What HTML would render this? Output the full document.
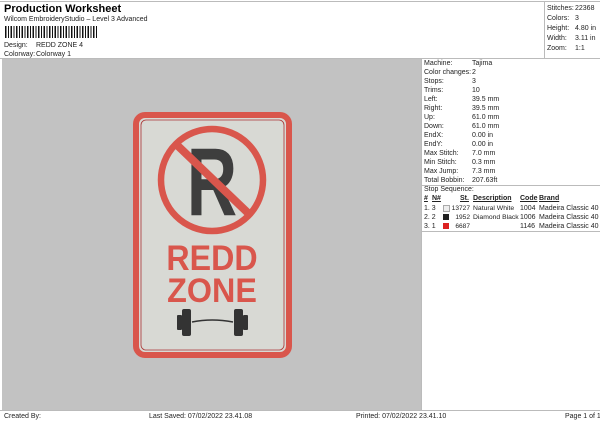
<!DOCTYPE html>
<html><head><style>
body{margin:0;width:600px;height:424px;background:#fff;font-family:"Liberation Sans",sans-serif;font-size:7px;color:#222;position:relative;overflow:hidden}
.a{position:absolute;white-space:nowrap}
.hl{position:absolute;background:#bbb}
</style></head><body>
<div class="hl" style="left:0;top:1px;width:600px;height:1px"></div>
<div class="a" style="left:4px;top:3px;font-size:11px;font-weight:bold;color:#000">Production Worksheet</div>
<div class="a" style="left:4px;top:16px">Wilcom EmbroideryStudio – Level 3 Advanced</div>
<div class="a" style="left:5px;top:26px;width:93px;height:12px;background:repeating-linear-gradient(90deg,#111 0 1.5px,#fff 1.5px 3px,#111 3px 4px,#fff 4px 5.5px)"></div>
<div class="a" style="left:4px;top:42px">Design:</div><div class="a" style="left:36px;top:42px">REDD ZONE 4</div>
<div class="a" style="left:4px;top:51px">Colorway:</div><div class="a" style="left:36px;top:51px">Colorway 1</div>
<div class="hl" style="left:544px;top:1px;width:1px;height:57px"></div>
<div class="a" style="left:547px;top:4px;line-height:10px">Stitches:<br>Colors:<br>Height:<br>Width:<br>Zoom:</div>
<div class="a" style="left:575px;top:4px;line-height:10px">22368<br>3<br>4.80 in<br>3.11 in<br>1:1</div>
<div class="hl" style="left:0;top:58px;width:600px;height:1px"></div>
<div class="a" style="left:2px;top:59px;width:419px;height:351px;background:#c2c2c2"></div>
<div class="hl" style="left:421px;top:59px;width:1px;height:351px"></div>
<div class="a" style="left:424px;top:59px;line-height:9px">Machine:<br>Color changes:<br>Stops:<br>Trims:<br>Left:<br>Right:<br>Up:<br>Down:<br>EndX:<br>EndY:<br>Max Stitch:<br>Min Stitch:<br>Max Jump:<br>Total Bobbin:</div>
<div class="a" style="left:472px;top:59px;line-height:9px">Tajima<br>2<br>3<br>10<br>39.5 mm<br>39.5 mm<br>61.0 mm<br>61.0 mm<br>0.00 in<br>0.00 in<br>7.0 mm<br>0.3 mm<br>7.3 mm<br>207.63ft</div>
<div class="hl" style="left:422px;top:185px;width:178px;height:1px"></div>
<div class="a" style="left:424px;top:186px">Stop Sequence:</div>
<div class="a" style="left:424px;top:195px;font-weight:bold;text-decoration:underline">#</div>
<div class="a" style="left:432px;top:195px;font-weight:bold;text-decoration:underline">N#</div>
<div class="a" style="left:460px;top:195px;font-weight:bold;text-decoration:underline">St.</div>
<div class="a" style="left:473px;top:195px;font-weight:bold;text-decoration:underline">Description</div>
<div class="a" style="left:520px;top:195px;font-weight:bold;text-decoration:underline">Code</div>
<div class="a" style="left:539px;top:195px;font-weight:bold;text-decoration:underline">Brand</div>
<div class="a" style="left:424px;top:204px;line-height:9px">1. 3<br>2. 2<br>3. 1</div>
<div class="a" style="left:443px;top:205px;width:5px;height:5px;border:1px solid #aaa;background:#eee"></div>
<div class="a" style="left:443px;top:214px;width:6px;height:6px;background:#222"></div>
<div class="a" style="left:443px;top:223px;width:6px;height:6px;background:#d22"></div>
<div class="a" style="left:451px;top:204px;line-height:9px;text-align:right;width:19px;font-size:6.6px">13727<br>1952<br>6687</div>
<div class="a" style="left:473px;top:204px;line-height:9px;font-size:6.8px">Natural White<br>Diamond Black</div>
<div class="a" style="left:520px;top:204px;line-height:9px">1004<br>1006<br>1146</div>
<div class="a" style="left:539px;top:204px;line-height:9px">Madeira Classic 40<br>Madeira Classic 40<br>Madeira Classic 40</div>
<div class="hl" style="left:422px;top:231px;width:178px;height:1px"></div>
<div class="hl" style="left:0;top:410px;width:600px;height:1px"></div>
<div class="a" style="left:4px;top:413px">Created By:</div>
<div class="a" style="left:149px;top:413px">Last Saved: 07/02/2022 23.41.08</div>
<div class="a" style="left:356px;top:413px">Printed: 07/02/2022 23.41.10</div>
<div class="a" style="left:565px;top:413px">Page 1 of 1</div>
<svg class="a" style="left:0;top:0" width="600" height="424">
<rect x="136" y="115" width="153" height="240" rx="9" fill="#d8d9d4" stroke="#d9564c" stroke-width="6"/>
<rect x="141" y="120" width="143" height="230" rx="5" fill="none" stroke="#a33" stroke-width="0.8"/>
<text transform="translate(212,215) scale(0.72,1)" font-family="Liberation Sans" font-weight="bold" font-size="97" fill="#3e3e3e" text-anchor="middle">R</text>
<circle cx="212" cy="180" r="51" fill="none" stroke="#d9564c" stroke-width="6.5"/>
<line x1="178" y1="146" x2="248" y2="213" stroke="#d9564c" stroke-width="8"/>
<text transform="translate(212,270) scale(0.92,1)" font-family="Liberation Sans" font-weight="bold" font-size="35" fill="#d9564c" text-anchor="middle">REDD</text>
<text transform="translate(212,302) scale(0.95,1)" font-family="Liberation Sans" font-weight="bold" font-size="34" fill="#d9564c" text-anchor="middle">ZONE</text>
<path d="M192 322 Q212 318 233 322" stroke="#333" stroke-width="1.6" fill="none"/>
<rect x="177" y="315" width="5" height="15" rx="1" fill="#333"/><rect x="182" y="309" width="9" height="27" rx="2" fill="#333"/>
<rect x="243" y="315" width="5" height="15" rx="1" fill="#333"/><rect x="234" y="309" width="9" height="27" rx="2" fill="#333"/>
</svg>
</body></html>
